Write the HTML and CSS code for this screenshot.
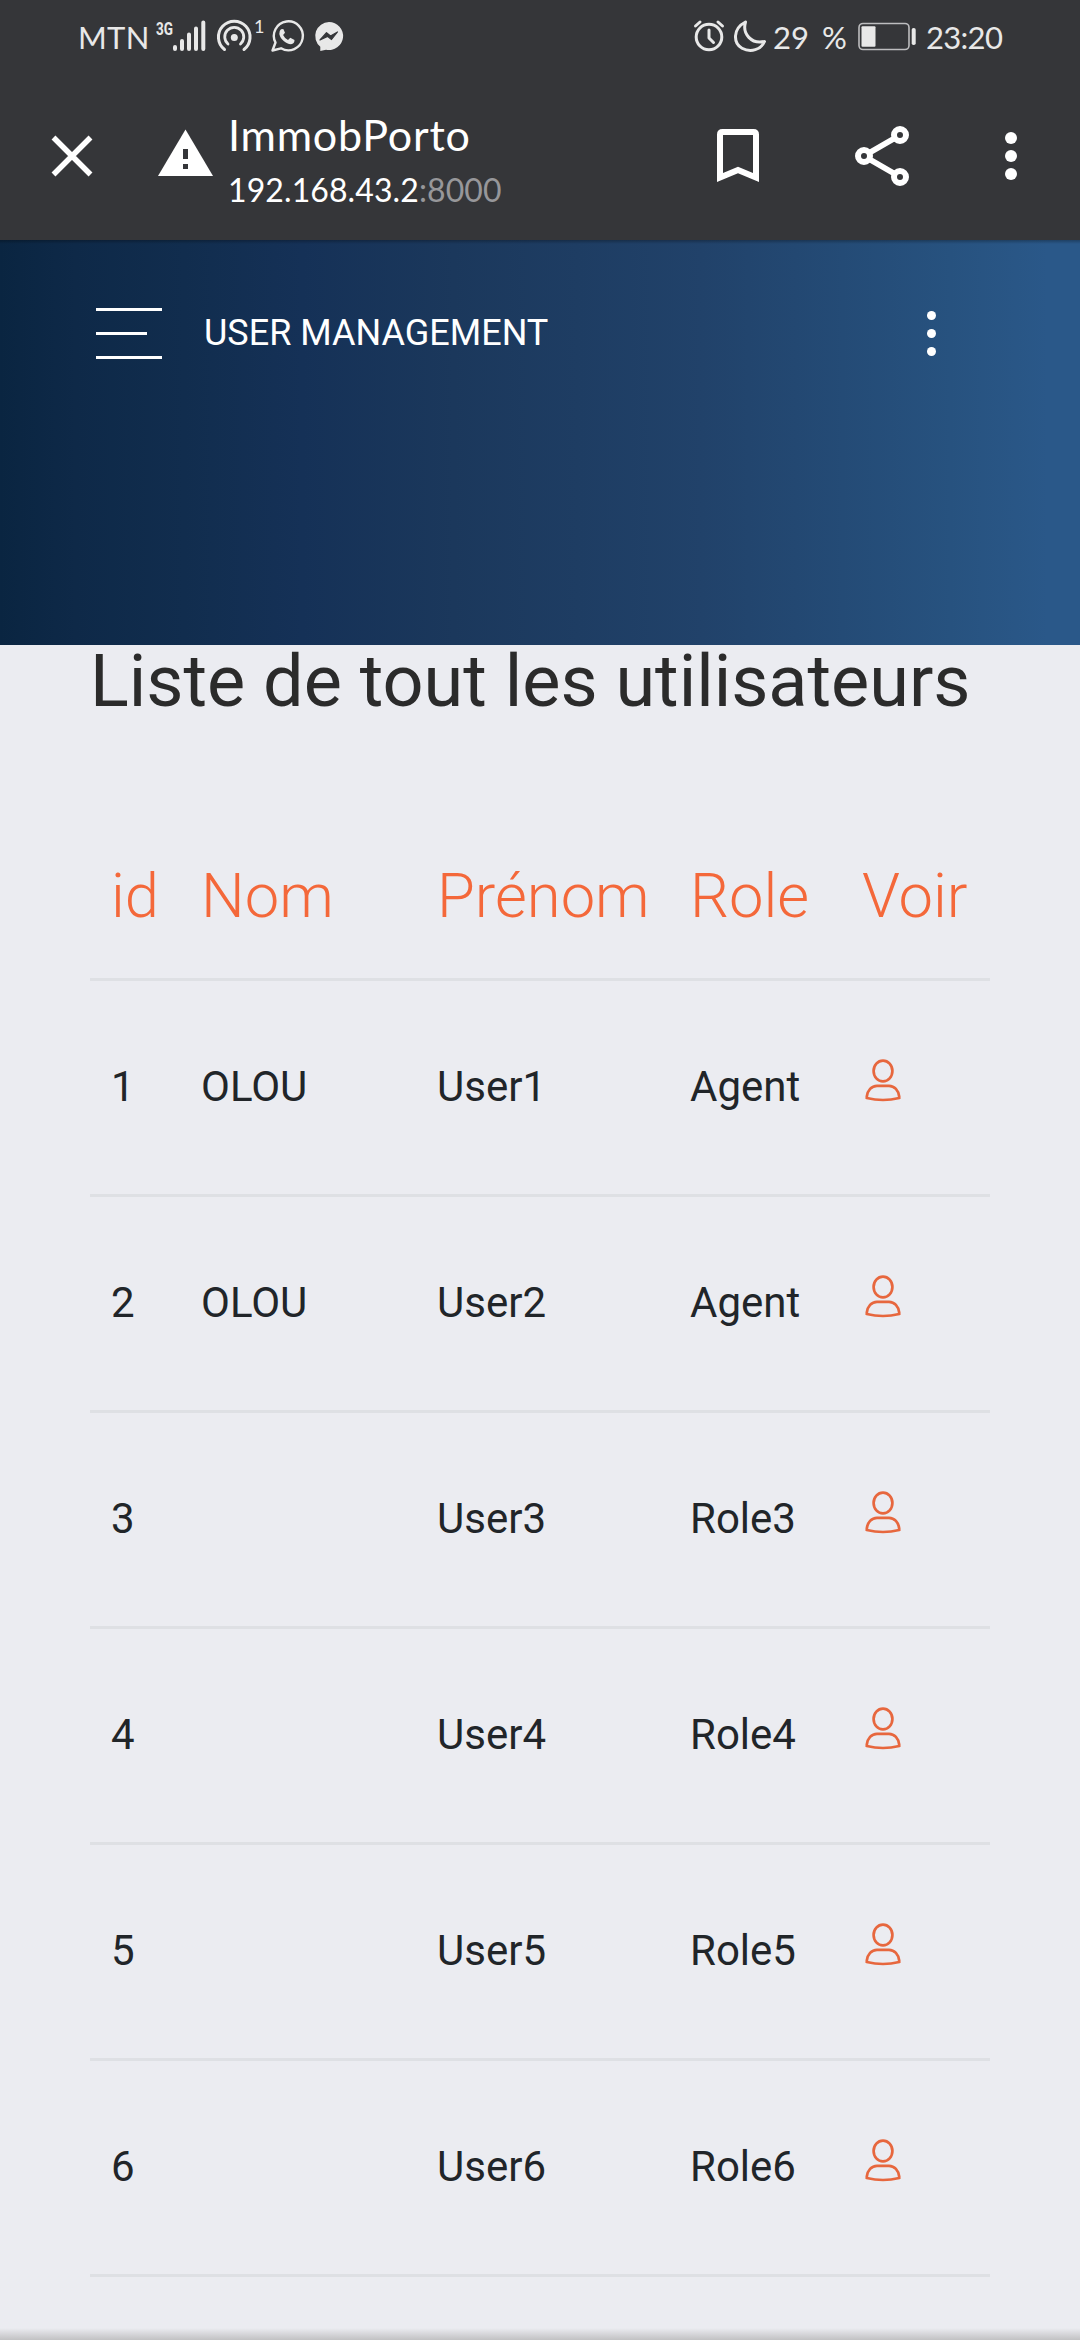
FILE: index.html
```html
<!DOCTYPE html>
<html lang="fr">
<head>
<meta charset="utf-8">
<title>ImmobPorto</title>
<link rel="stylesheet" href="styles.css">
</head>
<body>
<svg class="defs" width="0" height="0" aria-hidden="true">
  <symbol id="person" viewBox="0 0 36 44">
    <ellipse cx="18" cy="12" rx="9.4" ry="10.4"/>
    <path d="M1.8 39V37.500C2.500 31.500 6.500 26.800 12 26.800H24C29.500 26.800 33.500 31.500 34.200 37.500V39Q18 43 1.800 39Z"/>
  </symbol>
</svg>
<header class="browser">
  <div class="status">
    <div class="status-group">
      <span class="carrier">MTN</span>
      <svg class="signal" width="56" height="72" viewBox="152 0 56 72">
        <text class="net" x="156" y="34.500" textLength="17" lengthAdjust="spacingAndGlyphs">3G</text>
        <g stroke="#e8e8e8" stroke-width="4" stroke-linecap="round"><path d="M175 47v2M182 41v8M189 34.500v14.500M196 28.500v20.500M203.300 22.500v26.500"/></g>
      </svg>
      <svg class="hotspot" width="60" height="72" viewBox="208 0 60 72">
        <g fill="none" stroke="#e8e8e8" stroke-width="3" stroke-linecap="round">
          <path d="M224.500 49.500A15.800 15.800 0 1 1 244 49.500"/>
          <path d="M228 44A9.500 9.500 0 1 1 240.500 44" stroke-width="2.800"/>
        </g>
        <circle cx="234.300" cy="37.500" r="3.500" fill="#e8e8e8"/>
        <text class="count" x="254" y="33">1</text>
      </svg>
      <svg class="whatsapp" width="42" height="72" viewBox="268 0 42 72">
        <path d="M272.500 50.500L275.500 42.500A14.500 14.500 0 1 1 281 48.300Z" fill="none" stroke="#e8e8e8" stroke-width="2.400" stroke-linejoin="round"/>
        <path d="M281 29.300Q279 31 279.300 34C280.500 39.500 286 44 291 44.200Q294.500 43.700 294.500 40L290.300 37.700L288 40Q284.500 38.200 283.100 35L285 32.700L283.300 28.900Z" fill="#e8e8e8"/>
      </svg>
      <svg class="messenger" width="40" height="72" viewBox="310 0 40 72">
        <path d="M329 22A14.200 14 0 1 1 326 49.700L320.300 51V46.800A14 14 0 0 1 329 22Z" fill="#e8e8e8"/>
        <path d="M320 40L326.500 32.700L330.500 36L337.500 32L331.500 39.500L327.500 36.400Z" fill="#353639" stroke="#353639" stroke-width="1.200" stroke-linejoin="round"/>
      </svg>
    </div>
    <div class="status-group">
      <svg class="alarm" width="38" height="72" viewBox="690 0 38 72">
        <g fill="none" stroke="#e8e8e8" stroke-width="3" stroke-linecap="round" stroke-linejoin="round">
          <circle cx="709" cy="37" r="12.800"/><path d="M709 30v8l4.500 4.500M695.500 26l4.500-4M722.500 26l-4.500-4"/>
        </g>
      </svg>
      <svg class="moon" width="44" height="72" viewBox="728 0 44 72">
        <path d="M745.500 22C732 29 733.500 43.500 742 48.200C751 53 761 49.500 764.500 41.500C751.500 44.500 742 34 745.500 22Z" fill="none" stroke="#e8e8e8" stroke-width="3" stroke-linejoin="round"/>
      </svg>
      <span class="percent">29 %</span>
      <svg class="battery" width="66" height="72" viewBox="854 0 66 72">
        <rect x="859" y="23.500" width="50" height="26" rx="4" fill="none" stroke="#bdbdbf" stroke-width="1.600"/>
        <rect x="861.500" y="26.300" width="14" height="20.400" rx="1" fill="#e8e8e8"/>
        <rect x="911.700" y="28" width="4" height="17" rx="1.800" fill="#e8e8e8"/>
      </svg>
      <span class="clock">23:20</span>
    </div>
  </div>
  <div class="toolbar">
    <svg class="close" width="150" height="168" viewBox="0 72 150 168"><path d="M53.500 137.500L90.500 174.500M90.500 137.500L53.500 174.500" stroke="#fff" stroke-width="5.500"/></svg>
    <svg class="warning" width="72" height="168" viewBox="150 72 72 168"><path d="M158 176L185.500 129.500L213 176Z" fill="#fff"/><path d="M183 149h5v10h-5zM183 164h5v5h-5z" fill="#353639"/></svg>
    <div class="address">
      <div class="site">ImmobPorto</div>
      <div class="url">192.168.43.2<span class="port">:8000</span></div>
    </div>
    <svg class="actions" width="400" height="168" viewBox="680 72 400 168">
      <path d="M720 177.500V134.500Q720 132 722.500 132H753.500Q756 132 756 134.500V177.500L738 170Z" fill="none" stroke="#fff" stroke-width="6"/>
      <g fill="none" stroke="#fff" stroke-width="6"><circle cx="864" cy="156" r="6"/><circle cx="900" cy="135" r="6"/><circle cx="900" cy="177" r="6"/><path d="M869 153L895 138M869 159L895 174" stroke-width="5.500"/></g>
      <g fill="#fff"><circle cx="1011" cy="138" r="6"/><circle cx="1011" cy="156" r="6"/><circle cx="1011" cy="174" r="6"/></g>
    </svg>
  </div>
</header>
<section class="hero">
  <div class="menu"><i></i><i class="short"></i><i></i></div>
  <span class="hero-title">USER MANAGEMENT</span>
  <div class="dots"><i></i><i></i><i></i></div>
</section>
<main>
  <h1>Liste de tout les utilisateurs</h1>
  <table>
    <colgroup><col class="c-id"><col class="c-nom"><col class="c-prenom"><col class="c-role"><col class="c-voir"></colgroup>
    <thead><tr><th>id</th><th>Nom</th><th>Prénom</th><th>Role</th><th>Voir</th></tr></thead>
    <tbody>
      <tr><td>1</td><td>OLOU</td><td>User1</td><td>Agent</td><td><svg class="person"><use href="#person"/></svg></td></tr>
      <tr><td>2</td><td>OLOU</td><td>User2</td><td>Agent</td><td><svg class="person"><use href="#person"/></svg></td></tr>
      <tr><td>3</td><td></td><td>User3</td><td>Role3</td><td><svg class="person"><use href="#person"/></svg></td></tr>
      <tr><td>4</td><td></td><td>User4</td><td>Role4</td><td><svg class="person"><use href="#person"/></svg></td></tr>
      <tr><td>5</td><td></td><td>User5</td><td>Role5</td><td><svg class="person"><use href="#person"/></svg></td></tr>
      <tr><td>6</td><td></td><td>User6</td><td>Role6</td><td><svg class="person"><use href="#person"/></svg></td></tr>
    </tbody>
  </table>
</main>
<footer class="edge"></footer>
</body>
</html>
```
FILE: styles.css
```css
* { box-sizing: border-box; }
body { margin: 0; width: 1080px; height: 2340px; overflow: hidden; display: flex; flex-direction: column; background: #ebecf1; font-family: Roboto, sans-serif; color: #212529; }
svg { display: block; flex: none; }
.defs { position: absolute; }
.browser { height: 240px; flex: none; background: #353639; color: #fff; font-family: Lato, sans-serif; }
.status { height: 72px; display: flex; justify-content: space-between; padding: 0 76px 0 78px; color: #e8e8e8; font-size: 31px; line-height: 75px; white-space: nowrap; }
.status-group { display: flex; }
.carrier { width: 74px; letter-spacing: 0.3px; }
.percent { width: 82px; padding-left: 1px; word-spacing: 5px; }
.clock { width: 84px; padding-left: 6px; letter-spacing: -0.7px; }
.net { font: bold 19px Roboto, sans-serif; fill: #e8e8e8; }
.count { font: 18px Lato, sans-serif; fill: #e8e8e8; }
.toolbar { height: 168px; display: flex; }
.address { width: 458px; padding-top: 35px; padding-left: 6px; white-space: nowrap; }
.site { font-size: 43px; line-height: 56px; letter-spacing: 0.8px; }
.url { font-size: 32px; line-height: 54px; letter-spacing: 0.1px; }
.port { color: #97979a; }
.hero { height: 405px; flex: none; display: flex; align-items: flex-start; padding: 68px 144px 0 96px; color: #fff; background: linear-gradient(#0004, #0000 4px), linear-gradient(to right, #0a2541 0, #0e2948 7%, #112d4e 17%, #153157 28%, #1b385c 42%, #21426a 65%, #244b76 78%, #27527f 88%, #2a5889 97%); }
.menu { width: 108px; display: flex; flex-direction: column; gap: 21px; }
.menu i { width: 66px; height: 3px; background: #fff; }
.menu .short { width: 51px; }
.hero-title { flex: 1; font-size: 36px; line-height: 51px; }
.dots { display: flex; flex-direction: column; gap: 9px; padding-top: 3px; }
.dots i { width: 9px; height: 9px; border-radius: 50%; background: #fff; }
main { padding: 0 90px; flex: 1; }
h1 { margin: 0; height: 177px; font-size: 72px; line-height: 73px; font-weight: 400; color: #2b2b2b; white-space: nowrap; }
table { width: 900px; table-layout: fixed; border-collapse: separate; border-spacing: 0; }
th, td { text-align: left; padding: 0 0 0 21px; border-bottom: 3px solid #dee0e4; white-space: nowrap; vertical-align: middle; }
th { height: 159px; padding-bottom: 9px; font-size: 61.500px; font-weight: 300; color: #f4683a; line-height: 72px; }
td { height: 216px; padding-bottom: 2px; font-size: 42px; line-height: 60px; }
.c-id { width: 90px; }
.c-nom { width: 236px; }
.c-prenom { width: 253px; }
.c-role { width: 172px; }
.c-voir { width: 149px; }
.person { width: 36px; height: 44px; margin: 0 0 12px 3px; fill: none; stroke: #e7673e; stroke-width: 2.700; }
.edge { height: 12px; flex: none; background: linear-gradient(#ebecf1, #c1c1c3); }
```
